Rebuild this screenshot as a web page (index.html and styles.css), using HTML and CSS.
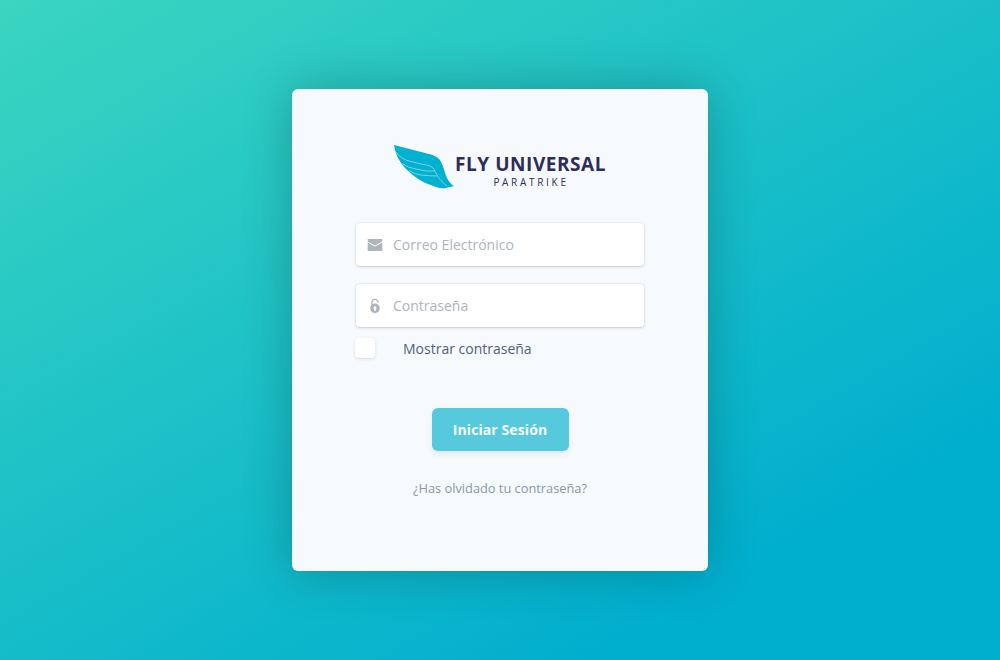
FILE: index.html
```html
<!DOCTYPE html>
<html lang="es">
<head>
<meta charset="utf-8">
<title>Fly Universal Paratrike</title>
<link rel="stylesheet" href="styles.css">
</head>
<body>
<main class="card">
  <header class="brand">
    <svg class="wing" viewBox="0 0 60 44" aria-hidden="true">
      <path fill="#00b1d2" d="M0 0L33 8.500Q42 10 46 15C52 25 50 34 60 41.500Q55 41 52 43Q46 44 38 40.500C27 37 19 31 12 24Q2 14 0 0Z"/>
      <path fill="none" stroke="#80cfdf" stroke-width="1" d="M2 7Q7 14 15 16L27 19Q37 20 40 24Q45 36 53 41M8 18.500Q14 23 22 24L32 26Q38 26 41 26M15 25.500Q20 29 27 30Q36 31 43 31"/>
    </svg>
    <div class="wordmark">
      <span class="name">FLY UNIVERSAL</span>
      <span class="sub">PARATRIKE</span>
    </div>
  </header>
  <form class="form">
    <label class="field">
      <svg class="icon" viewBox="0 0 16 16" aria-hidden="true">
        <path fill="currentColor" d="M.7 2h14.600v2.500L8 8.600.7 4.500zM.7 5.500L8 9.600l7.300-4.100V14H.7z"/>
      </svg>
      <input class="input" type="email" placeholder="Correo Electrónico">
    </label>
    <label class="field">
      <svg class="icon" viewBox="0 0 16 16" aria-hidden="true">
        <path fill="none" stroke="currentColor" stroke-width="1.300" d="M4.900 8V4.500a3.100 3.200 0 0 1 6.200 0"/>
        <path fill="currentColor" fill-rule="evenodd" d="M8 5.600a4.800 4.800 0 1 0 0 9.600a4.800 4.800 0 0 0 0-9.600zM8 8.300a1.700 1.700 0 0 1 .9 3V12.700H7.100v-1.400a1.700 1.700 0 0 1 .9-3z"/>
      </svg>
      <input class="input" type="password" placeholder="Contraseña">
    </label>
    <label class="show"><input class="check" type="checkbox"><span>Mostrar contraseña</span></label>
    <button class="submit" type="button">Iniciar Sesión</button>
    <a class="forgot">¿Has olvidado tu contraseña?</a>
  </form>
</main>
</body>
</html>
```
FILE: styles.css
```css
* { box-sizing: border-box; }
body {
  margin: 0;
  height: 660px;
  display: flex;
  align-items: center;
  justify-content: center;
  font-family: "Open Sans", sans-serif;
  background: linear-gradient(150deg, #3bd5c0 0%, #00aece 82%);
}
.card {
  width: 416px;
  height: 482px;
  padding: 56px 63px 0;
  border-radius: 6px;
  background: #f7fafc;
  box-shadow: 0 0 50px rgba(0, 0, 0, .24);
}
.brand {
  display: flex;
  margin-left: 39px;
  height: 78px;
}
.wing { width: 60px; height: 44px; flex: none; }
.wordmark {
  display: flex;
  flex-direction: column;
  align-items: center;
  padding-top: 7px;
  margin-left: 1px;
  color: #2e2c5a;
  white-space: nowrap;
}
.name { font-size: 19px; line-height: 25px; font-weight: 700; letter-spacing: .55px; }
.sub { font-size: 10px; line-height: 12px; letter-spacing: 2.7px; margin: -1px 0 0 1px; }
.form { display: flex; flex-direction: column; align-items: center; }
.field {
  display: flex;
  align-items: center;
  width: 288px;
  height: 43px;
  padding: 0 11px;
  margin-bottom: 18px;
  border-radius: 4px;
  background: #fff;
  color: #adb5bd;
  box-shadow: 0 0 0 1px rgba(50, 50, 93, .04), 0 1px 3px rgba(50, 50, 93, .18), 0 1px 0 rgba(0, 0, 0, .02);
}
.icon { width: 16px; height: 16px; flex: none; }
.input {
  flex: 1;
  min-width: 0;
  border: 0;
  outline: 0;
  padding: 0;
  margin-left: 10px;
  background: none;
  font: 14px/21px "Open Sans", sans-serif;
}
.input::placeholder { color: #adb5bd; }
.show {
  display: flex;
  align-items: center;
  align-self: stretch;
  gap: 28px;
  height: 20px;
  margin-top: -7px;
  color: #525f7f;
  font-size: 14px;
}
.check {
  appearance: none;
  width: 20px;
  height: 20px;
  margin: 0;
  border-radius: 4px;
  background: #fff;
  box-shadow: 0 1px 3px rgba(50, 50, 93, .15), 0 1px 0 rgba(0, 0, 0, .02);
}
.submit {
  width: 137px;
  height: 43px;
  margin-top: 50px;
  padding: 0;
  border: 0;
  border-radius: 6px;
  background: #57c9dc;
  color: #f7fafc;
  font: 700 14px/21px "Open Sans", sans-serif;
  letter-spacing: .1px;
  box-shadow: 0 4px 6px rgba(50, 50, 93, .06), 0 1px 3px rgba(0, 0, 0, .05);
}
.forgot { margin-top: 27px; font-size: 12.8px; line-height: 20px; color: #8898aa; }
```
